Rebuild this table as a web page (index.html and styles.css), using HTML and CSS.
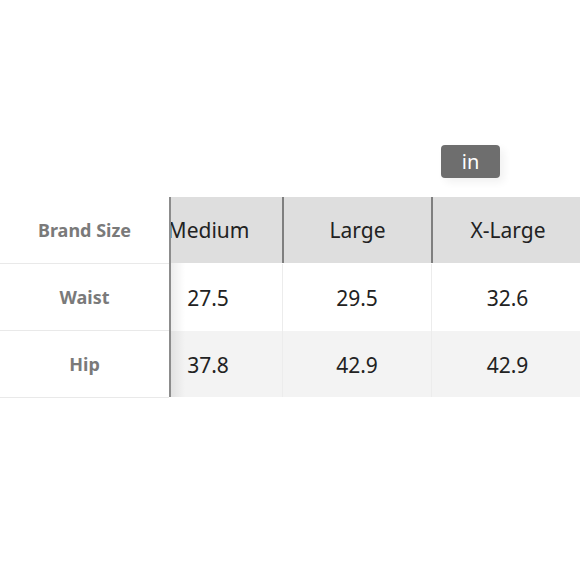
FILE: index.html
```html
<!DOCTYPE html>
<html>
<head>
<meta charset="utf-8">
<link rel="stylesheet" href="styles.css">
</head>
<body>
<div class="page">
  <div class="toolbar">
    <div class="unit-btn">in</div>
  </div>
  <div class="chart">
    <div class="labels">
      <div class="label head">Brand Size</div>
      <div class="label">Waist</div>
      <div class="label">Hip</div>
    </div>
    <div class="scroller">
      <div class="grid">
        <div class="cell th">Medium</div>
        <div class="cell th">Large</div>
        <div class="cell th">X-Large</div>
        <div class="cell">27.5</div>
        <div class="cell">29.5</div>
        <div class="cell">32.6</div>
        <div class="cell alt">37.8</div>
        <div class="cell alt">42.9</div>
        <div class="cell alt">42.9</div>
      </div>
      <div class="fade"></div>
    </div>
  </div>
</div>
</body>
</html>
```
FILE: styles.css
```css
html, body {
  margin: 0;
  padding: 0;
  background: #ffffff;
}
body {
  font-family: "Noto Sans", "Open Sans", sans-serif;
  width: 580px;
  height: 580px;
  overflow: hidden;
}
.page {
  padding-top: 145px;
}
.toolbar {
  display: flex;
  justify-content: flex-end;
  padding-right: 80px;
  height: 52px;
}
.unit-btn {
  width: 59px;
  height: 33px;
  background: #6e6e6e;
  color: #ffffff;
  border-radius: 4px;
  font-size: 20px;
  line-height: 33px;
  text-align: center;
  box-shadow: 4px 4px 8px rgba(0,0,0,0.06);
}
.chart {
  display: flex;
}
.labels {
  width: 169px;
  display: flex;
  flex-direction: column;
}
.label {
  height: 66px;
  border-bottom: 1px solid #e9e9e9;
  display: flex;
  align-items: center;
  justify-content: center;
  font-weight: bold;
  color: #7a7a7a;
  font-size: 18px;
}
.scroller {
  position: relative;
  flex: 1;
  overflow: hidden;
  border-left: 2px solid #8c8c8c;
  height: 200px;
}
.grid {
  display: grid;
  grid-template-columns: 149px 149px 152px;
  grid-auto-rows: 67px;
  margin-left: -38px;
}
.cell {
  display: flex;
  align-items: center;
  justify-content: center;
  font-size: 21px;
  color: #222222;
  border-left: 1px solid #ececec;
  background: #ffffff;
}
.cell.th {
  background: #dedede;
  border-left: 2px solid #7f7f7f;
  height: 66px;
}
.cell.alt {
  background: #f3f3f3;
}
.fade {
  position: absolute;
  left: 0;
  top: 66px;
  width: 14px;
  height: 134px;
  background: linear-gradient(to right, rgba(0,0,0,0.07), rgba(0,0,0,0));
}
```
